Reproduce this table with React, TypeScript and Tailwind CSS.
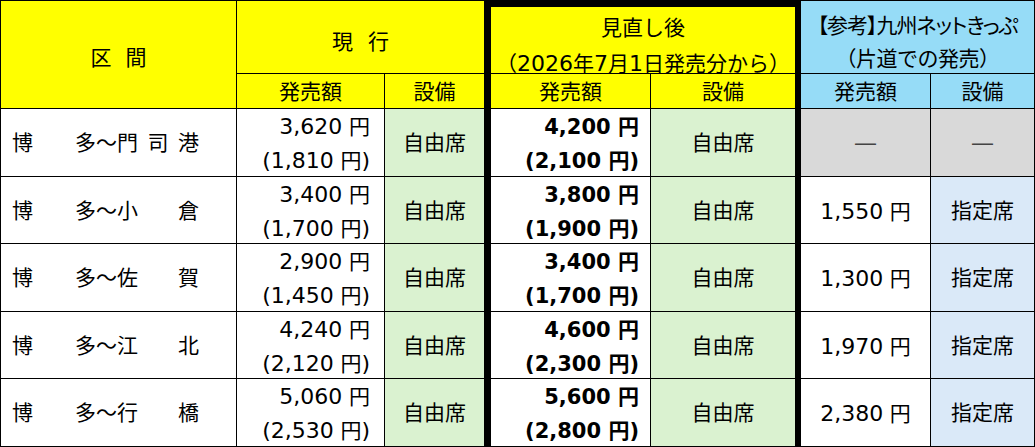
import React from 'react';

type Row = {
  to: string[];
  cur: [string, string];
  next: [string, string];
  net?: string;
};

const rows: Row[] = [
  { to: ['門', '司', '港'], cur: ['3,620', '1,810'], next: ['4,200', '2,100'] },
  { to: ['小', '倉'], cur: ['3,400', '1,700'], next: ['3,800', '1,900'], net: '1,550' },
  { to: ['佐', '賀'], cur: ['2,900', '1,450'], next: ['3,400', '1,700'], net: '1,300' },
  { to: ['江', '北'], cur: ['4,240', '2,120'], next: ['4,600', '2,300'], net: '1,970' },
  { to: ['行', '橋'], cur: ['5,060', '2,530'], next: ['5,600', '2,800'], net: '2,380' },
];

function Yen({ value, paren = false, bold = false }: { value: string; paren?: boolean; bold?: boolean }) {
  const num = bold ? 'text-[21px]' : 'text-[22px]';
  return (
    <span className="whitespace-nowrap">
      {paren && <span className={num}>(</span>}
      <span className={num}>{value}</span> 円
      {paren && <span className={num}>)</span>}
    </span>
  );
}

function Station({ to }: { to: string[] }) {
  return (
    <div className="flex items-center bg-white pl-[11px] pt-[3px]">
      <span className="w-[63px]">博</span>
      <span>多～</span>
      <span className="flex w-[82px] justify-between">
        {to.map((c) => (
          <span key={c}>{c}</span>
        ))}
      </span>
    </div>
  );
}

export default function App() {
  return (
    <div className="w-[1035px] bg-white font-['DejaVu_Sans','Noto_Sans_CJK_JP',sans-serif] text-[21px] text-black">
      <div className="grid w-[1035px] grid-cols-[235px_147px_99px_5px_159px_144px_4px_129px_103px] grid-rows-[72px_34px_67px_66px_67px_66px_67px] gap-px bg-black pb-px pl-px pt-px">
        {/* thick separators around the revised fares */}
        <div className="col-start-4 row-start-1 row-end-8 bg-black" />
        <div className="col-start-7 row-start-1 row-end-8 bg-black" />

        {/* header */}
        <div className="row-span-2 flex items-center justify-center gap-[14px] bg-[#ffff00] pt-[9px]">
          <span>区</span>
          <span>間</span>
        </div>
        <div className="col-span-2 flex items-center justify-center gap-[15px] bg-[#ffff00] pt-[12px]">
          <span>現</span>
          <span>行</span>
        </div>
        <div className="col-span-2 flex flex-col items-center border-t-[6px] border-black bg-[#ffff00] pt-[3px] leading-[36px]">
          <span>見直し後</span>
          <span className="whitespace-nowrap">
            （<span className="text-[22px]">2026</span>年<span className="text-[22px]">7</span>月
            <span className="text-[22px]">1</span>日発売分から）
          </span>
        </div>
        <div className="col-span-2 flex flex-col items-center bg-[#96dcf7] pt-[9px] leading-[33px]">
          <span className="whitespace-nowrap tracking-[-1px] [font-feature-settings:'palt']">【参考】九州ネットきっぷ</span>
          <span className="whitespace-nowrap tracking-[-0.5px]">（片道での発売）</span>
        </div>

        <div className="flex items-center justify-center bg-[#ffff00] pt-[4px]">発売額</div>
        <div className="flex items-center justify-center bg-[#ffff00] pt-[4px]">設備</div>
        <div className="flex items-center justify-center bg-[#ffff00] pt-[4px]">発売額</div>
        <div className="flex items-center justify-center bg-[#ffff00] pt-[4px]">設備</div>
        <div className="flex items-center justify-center bg-[#96dcf7] pt-[4px]">発売額</div>
        <div className="flex items-center justify-center bg-[#96dcf7] pt-[4px]">設備</div>

        {/* body */}
        {rows.map((r) => (
          <React.Fragment key={r.to.join('')}>
            <Station to={r.to} />
            <div className="flex flex-col items-end justify-center bg-white pr-[14px] pt-[3px] leading-[34px]">
              <Yen value={r.cur[0]} />
              <Yen value={r.cur[1]} paren />
            </div>
            <div className="flex items-center justify-center bg-[#daf2d0] pt-[3px]">自由席</div>
            <div className="flex flex-col items-end justify-center bg-white pr-[11px] pt-[3px] font-bold leading-[34px]">
              <Yen value={r.next[0]} bold />
              <Yen value={r.next[1]} paren bold />
            </div>
            <div className="flex items-center justify-center bg-[#daf2d0] pt-[3px]">自由席</div>
            {r.net ? (
              <>
                <div className="flex items-center justify-center bg-white pt-[3px]">
                  <Yen value={r.net} />
                </div>
                <div className="flex items-center justify-center bg-[#dae9f8] pt-[3px]">指定席</div>
              </>
            ) : (
              <>
                <div className="flex items-center justify-center bg-[#d9d9d9] pt-[3px] text-[#444]">―</div>
                <div className="flex items-center justify-center bg-[#d9d9d9] pt-[3px] text-[#444]">―</div>
              </>
            )}
          </React.Fragment>
        ))}
      </div>
    </div>
  );
}
